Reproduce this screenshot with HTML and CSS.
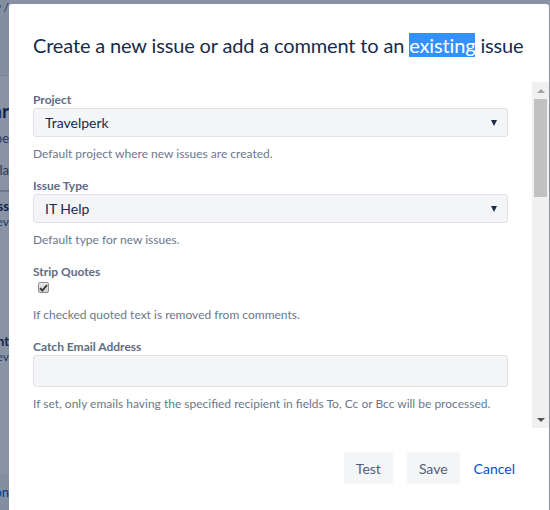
FILE: index.html
```html
<!DOCTYPE html>
<html lang="en">
  <head>
    <meta charset="UTF-8" />
    <title>Mail handler</title>
    <link rel="stylesheet" href="styles.css">
  </head>
  <body>
    <!-- page behind the dialog -->
    <div class="page">
      <div class="page-top"><span class="frag-row">JSP /</span></div>
      <div class="page-body">
        <div class="frag-row frag-title">Calendar</div>
        <div class="frag-row frag-sub">Describe</div>
        <div class="frag-row frag-link">Scala</div>
        <div class="frag-row frag-bold">Process</div>
        <div class="frag-row frag-small">Prev</div>
        <div class="frag-row frag-bold frag-gap">Content</div>
        <div class="frag-row frag-small">Prev</div>
      </div>
      <div class="page-foot"><span class="frag-row">Action</span></div>
    </div>
    <div class="blanket"></div>

    <!-- dialog -->
    <div class="dialog">
      <header class="dialog-header">
        <h1>Create a new issue or add a comment to an <span class="sel">existing</span> issue</h1>
      </header>
      <div class="dialog-content">
        <form class="form">
          <div class="field">
            <label>Project</label>
            <div class="select">Travelperk<span class="caret"></span></div>
            <p class="help">Default project where new issues are created.</p>
          </div>
          <div class="field">
            <label>Issue Type</label>
            <div class="select">IT Help<span class="caret"></span></div>
            <p class="help">Default type for new issues.</p>
          </div>
          <div class="field">
            <label>Strip Quotes</label>
            <div class="check-row">
              <span class="checkbox">
                <svg width="9" height="8" viewBox="0 0 9 8"><path d="M1 4.2 L3.3 6.5 L8 1.2" fill="none" stroke="#333" stroke-width="1.8"/></svg>
              </span>
            </div>
            <p class="help">If checked quoted text is removed from comments.</p>
          </div>
          <div class="field">
            <label>Catch Email Address</label>
            <div class="text-input"></div>
            <p class="help">If set, only emails having the specified recipient in fields To, Cc or Bcc will be processed.</p>
          </div>
        </form>
        <div class="scrollbar">
          <div class="sb-btn"><span class="sb-up"></span></div>
          <div class="sb-track"><div class="sb-thumb"></div></div>
          <div class="sb-btn"><span class="sb-down"></span></div>
        </div>
      </div>
      <footer class="dialog-footer">
        <button type="button" class="btn">Test</button>
        <button type="button" class="btn">Save</button>
        <button type="button" class="btn btn-link">Cancel</button>
      </footer>
    </div>
  </body>
</html>
```

FILE: styles.css
```css
/* resets */
* {
  padding: 0;
  margin: 0;
  box-sizing: border-box;
}
body {
  font-family: Lato, "Noto Sans", sans-serif;
  width: 550px;
  height: 510px;
  overflow: hidden;
  position: relative;
  background: #fff;
  color: #172b4d;
}

/* page behind */
.page {
  width: 9px;
  height: 510px;
  display: flex;
  flex-direction: column;
  overflow: hidden;
}
.page-top {
  height: 76px;
  background: #f4f5f7;
  border-bottom: 1px solid #dfe1e6;
  display: flex;
  justify-content: flex-end;
  font-size: 12px;
  color: #42526e;
}
.page-body {
  flex: 1;
  display: flex;
  flex-direction: column;
  align-items: flex-end;
  padding-top: 22px;
}
.frag-row {
  white-space: nowrap;
  display: flex;
  justify-content: flex-end;
}
.frag-title {
  font-size: 19px;
  font-weight: 700;
  line-height: 26px;
}
.frag-sub {
  font-size: 13px;
  margin-top: 6px;
  color: #42526e;
}
.frag-link {
  font-size: 13px;
  margin-top: 16px;
  padding-bottom: 12px;
  border-bottom: 2px solid #c1c7d0;
  width: 9px;
  color: #42526e;
}
.frag-bold {
  font-size: 13px;
  font-weight: 700;
  margin-top: 6px;
}
.frag-small {
  font-size: 12px;
  color: #42526e;
}
.frag-gap {
  margin-top: 104px;
}
.page-foot {
  height: 36px;
  background: #f4f5f7;
  display: flex;
  justify-content: flex-end;
  align-items: center;
  font-size: 13px;
  color: #0052cc;
}
.blanket {
  position: absolute;
  inset: 0;
  background: rgba(9, 30, 66, 0.48);
}

/* dialog */
.dialog {
  position: absolute;
  left: 9px;
  top: 4px;
  width: 540px;
  height: 506px;
  background: #fff;
  border-radius: 3px 3px 0 0;
  display: flex;
  flex-direction: column;
}
.dialog-header {
  padding: 27px 24px 23px;
}
.dialog-header h1 {
  font-size: 20px;
  font-weight: 400;
  line-height: 28px;
  letter-spacing: -0.15px;
  color: #172b4d;
  white-space: nowrap;
}
.sel {
  background: #3390ff;
  color: #fff;
}
.dialog-content {
  display: flex;
  height: 346px;
}
.form {
  flex: 1;
  padding: 10px 24px 0;
}
.field label {
  display: block;
  font-size: 12px;
  font-weight: 700;
  line-height: 16px;
  color: #5e6c84;
}
.select,
.text-input {
  height: 29px;
  background: #f4f5f7;
  border: 1px solid #dfe1e6;
  border-radius: 3px;
}
.select {
  display: flex;
  align-items: center;
  justify-content: space-between;
  padding: 0 10px 0 11px;
  font-size: 14px;
  color: #172b4d;
}
.caret {
  width: 0;
  height: 0;
  border-left: 3.5px solid transparent;
  border-right: 3.5px solid transparent;
  border-top: 6px solid #172b4d;
}
.text-input {
  height: 32px;
}
.help {
  font-size: 12px;
  line-height: 16px;
  color: #6b778c;
  margin: 9px 0 16px;
}
.check-row {
  height: 17px;
  padding: 2px 0 0 5px;
}
.checkbox {
  display: flex;
  align-items: center;
  justify-content: center;
  width: 11px;
  height: 11px;
  border: 1px solid #8f8f8f;
  border-radius: 2px;
  background: linear-gradient(#e8e8e8, #cfcfcf);
}
.check-row + .help {
  margin-top: 10px;
}

/* fake scrollbar */
.scrollbar {
  width: 17px;
  display: flex;
  flex-direction: column;
  background: #f0f0f0;
}
.sb-btn {
  height: 17px;
  display: flex;
  align-items: center;
  justify-content: center;
}
.sb-up,
.sb-down {
  width: 0;
  height: 0;
  border-left: 4px solid transparent;
  border-right: 4px solid transparent;
}
.sb-up {
  border-bottom: 4px solid #a3a3a3;
}
.sb-down {
  border-top: 4px solid #505050;
}
.sb-track {
  flex: 1;
  padding: 0 2px;
}
.sb-thumb {
  height: 98px;
  background: #c1c1c1;
}

/* footer */
.dialog-footer {
  display: flex;
  justify-content: flex-end;
  gap: 14px;
  padding: 24px 24px 0;
}
.btn {
  font-family: inherit;
  font-size: 14px;
  height: 32px;
  padding: 0 12px;
  border: none;
  border-radius: 3px;
  background: #f4f5f7;
  color: #505f79;
}
.btn-link {
  background: none;
  color: #0052cc;
  padding: 0 10px;
  margin-left: -10px;
}
```
